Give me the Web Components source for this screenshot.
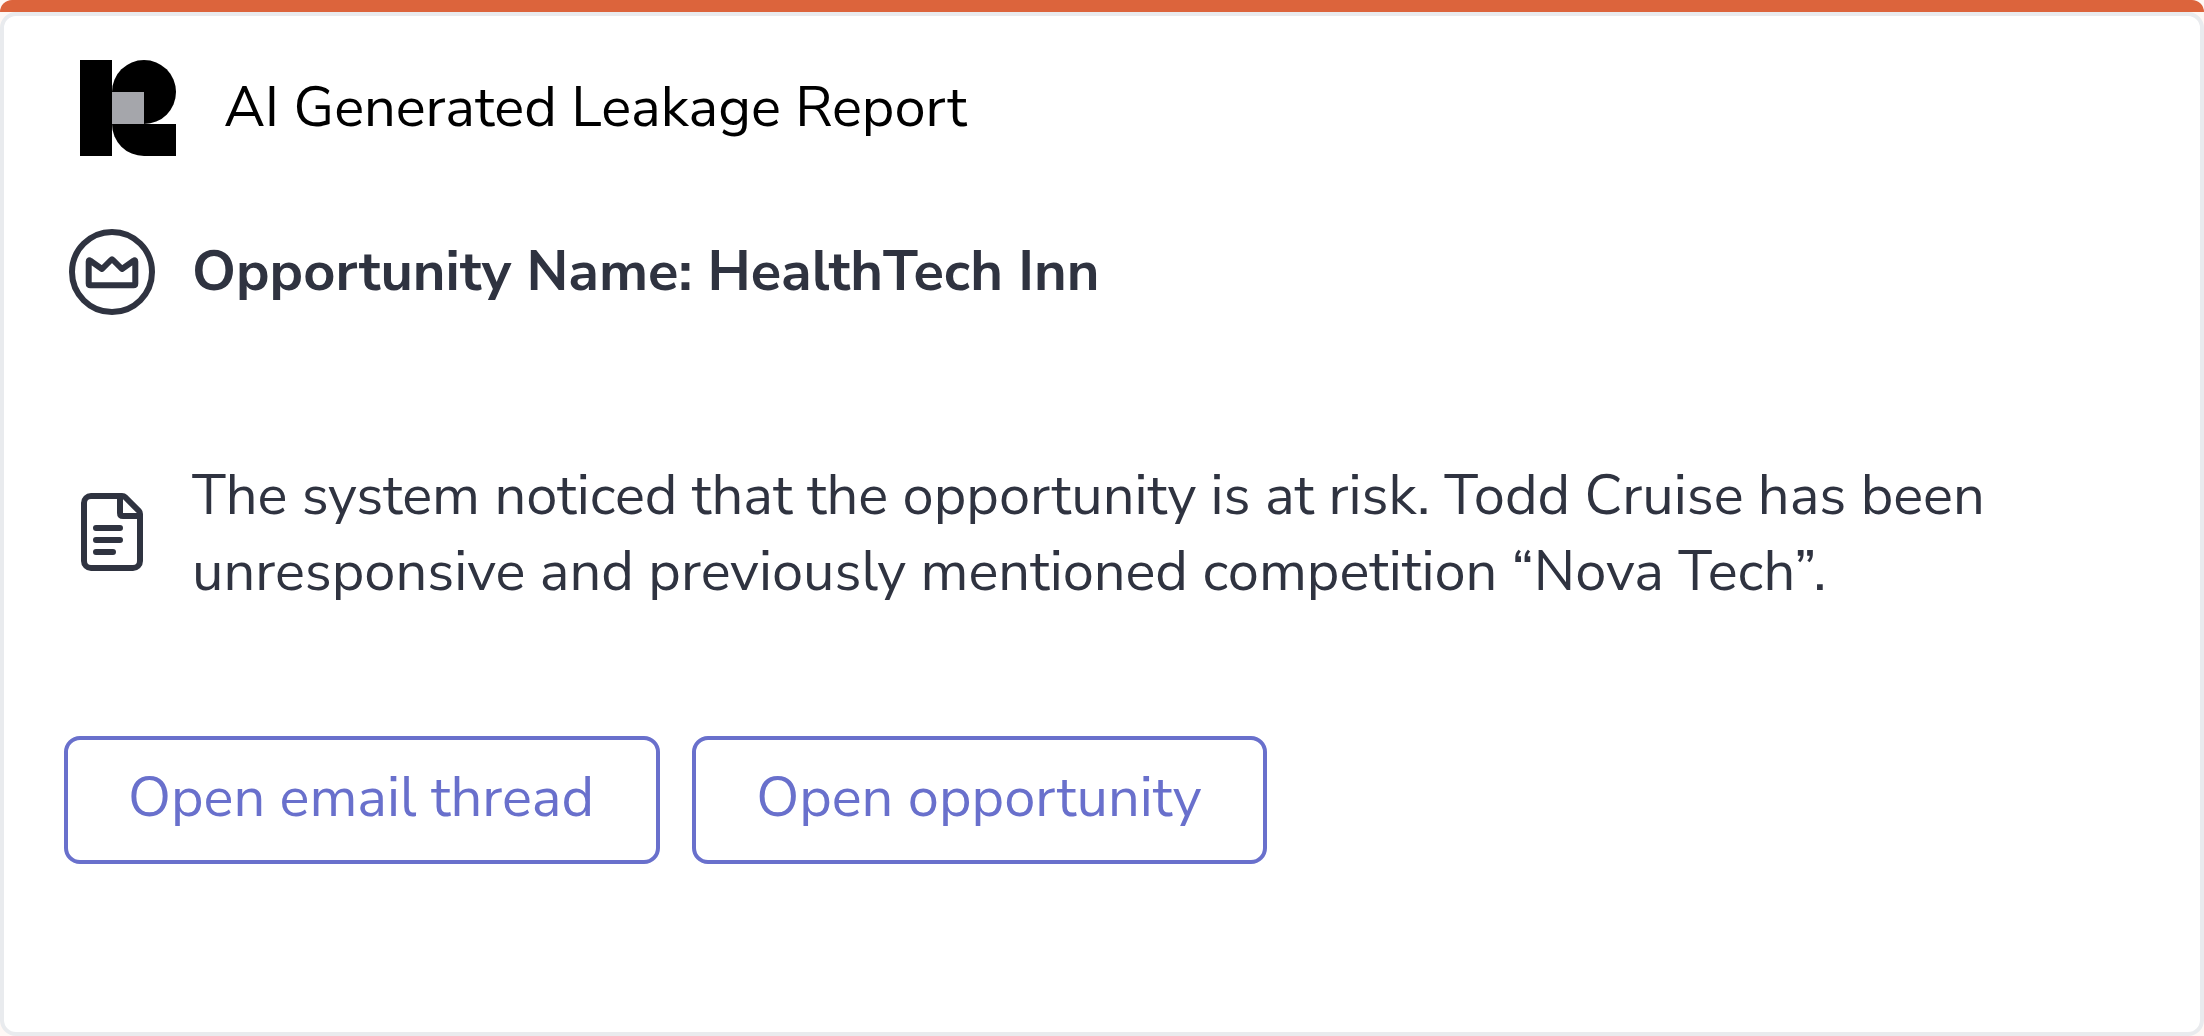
<!DOCTYPE html>
<html lang="en">
<head>
<meta charset="utf-8">
<meta name="viewport" content="width=device-width, initial-scale=1">
<title>AI Generated Leakage Report</title>
<style>
  body { margin: 0; background: #fef8f5; color: #2f3340; font: 400 56px/76px "Nunito Sans", "Open Sans", sans-serif; }
</style>
</head>
<body>
<report-card>
  <report-header>AI Generated Leakage Report</report-header>
  <report-row class="name"><crown-icon slot="icon"></crown-icon><strong>Opportunity Name: HealthTech Inn</strong></report-row>
  <report-row class="summary"><document-icon slot="icon"></document-icon>The system noticed that the opportunity is at risk. Todd Cruise has been unresponsive and previously mentioned competition “Nova Tech”.</report-row>
  <action-button slot="actions">Open email thread</action-button>
  <action-button slot="actions">Open opportunity</action-button>
</report-card>
<script>
  const define = (name, html) => {
    const template = document.createElement('template');
    template.innerHTML = html;
    customElements.define(name, class extends HTMLElement {
      constructor() {
        super();
        this.attachShadow({ mode: 'open' }).append(template.content.cloneNode(true));
      }
    });
  };

  define('report-card', `
    <style>
      :host { display: flex; flex-direction: column; min-height: 100vh; }
      .accent { height: 12px; border-radius: 12px 12px 0 0; background: #dc643c; }
      article { flex: 1; box-sizing: border-box; padding: 44px 60px 60px; border: 4px solid #e9ebee; border-radius: 16px; background: #fff; }
      .actions { display: flex; flex-wrap: wrap; gap: 32px; }
      ::slotted(report-header) { margin-bottom: 68px; }
      ::slotted(.name) { margin-bottom: 138px; }
      ::slotted(.summary) { margin-bottom: 126px; }
    </style>
    <div class="accent"></div>
    <article><slot></slot><div class="actions"><slot name="actions"></slot></div></article>`);

  define('report-header', `
    <style>
      :host { display: flex; align-items: center; gap: 48px; padding-left: 16px; color: #000; }
      svg { display: block; flex: none; width: 96px; height: 96px; }
      h1 { margin: 0; font: inherit; }
    </style>
    <svg viewBox="0 0 96 96" aria-hidden="true">
      <path d="M0 0h32v96H0z"/>
      <circle cx="64" cy="32" r="32"/>
      <path d="M32 64h64v32H64a32 32 0 0 1-32-32z"/>
      <path d="M32 32h32v32H32z" fill="#a5a6ab"/>
    </svg>
    <h1><slot></slot></h1>`);

  define('report-row', `
    <style>
      :host { display: flex; align-items: center; gap: 32px; }
      p { margin: 0; }
    </style>
    <slot name="icon"></slot>
    <p><slot></slot></p>`);

  const icon = (name, shapes) => define(name, `
    <style>
      :host { display: block; flex: none; width: 96px; height: 96px; }
      svg { display: block; width: 100%; height: 100%; fill: none; stroke: currentColor; stroke-width: 6; stroke-linecap: round; stroke-linejoin: round; }
    </style>
    <svg viewBox="0 0 96 96" aria-hidden="true">${shapes}</svg>`);

  icon('crown-icon', `
    <circle cx="48" cy="48" r="40"/>
    <path d="M24.700 37.500v22q0 1.700 1.700 1.700h43.200q1.700 0 1.700-1.700v-22q0-2-1.700-.7L58 45 49 36q-1-1-2 0l-9 9-11.600-8.200q-1.700-1.300-1.700.7z"/>`);

  icon('document-icon', `
    <path d="M27 10h31q2 0 3 1l14 14q1 1 1 3v47a7 7 0 0 1-7 7H27a7 7 0 0 1-7-7V17a7 7 0 0 1 7-7z"/>
    <path d="M56 11v16q0 3 3 3h16M32 42h24M32 54h24M32 66h17"/>`);

  define('action-button', `
    <style>
      :host { display: block; }
      button { display: block; box-sizing: border-box; height: 128px; margin: 0; padding: 0 62px 4px 60px; border: 4px solid #6970cc; border-radius: 16px; background: #fff; color: #6970cc; font: inherit; cursor: pointer; }
    </style>
    <button type="button"><slot></slot></button>`);
</script>
</body>
</html>
